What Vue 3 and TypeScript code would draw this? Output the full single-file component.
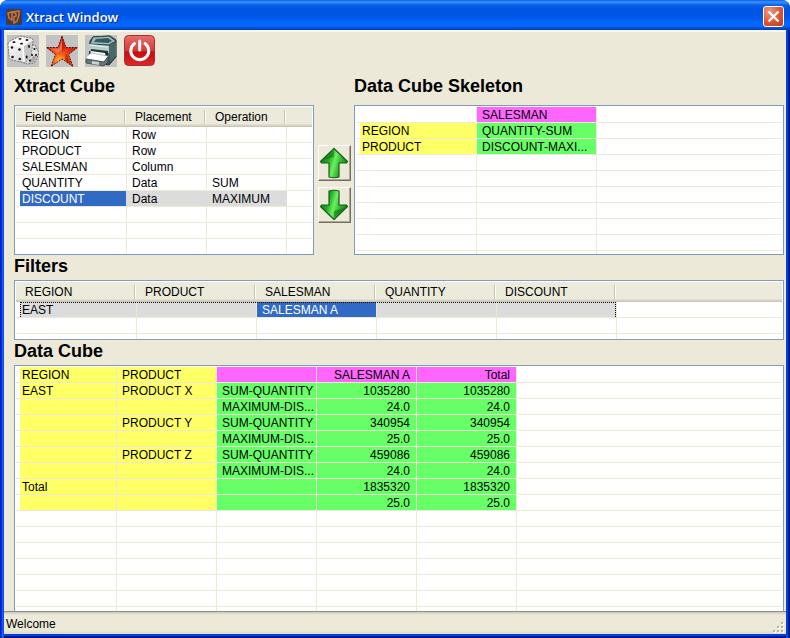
<script setup lang="ts">
import { ref } from 'vue'

interface Field {
  name: string
  placement: string
  operation: string
}

interface Cell {
  text: string
  tone: '' | 'yellow' | 'pink' | 'green'
  numeric?: boolean
}

const fields = ref<Field[]>([
  { name: 'REGION', placement: 'Row', operation: '' },
  { name: 'PRODUCT', placement: 'Row', operation: '' },
  { name: 'SALESMAN', placement: 'Column', operation: '' },
  { name: 'QUANTITY', placement: 'Data', operation: 'SUM' },
  { name: 'DISCOUNT', placement: 'Data', operation: 'MAXIMUM' },
])
const selected = ref(4)

function move(step: number) {
  const target = selected.value + step
  if (target < 0 || target >= fields.value.length) return
  const list = fields.value
  const moved = list[selected.value]
  list[selected.value] = list[target]
  list[target] = moved
  selected.value = target
}

const skeleton: Cell[][] = [
  [{ text: '', tone: '' }, { text: 'SALESMAN', tone: 'pink' }],
  [{ text: 'REGION', tone: 'yellow' }, { text: 'QUANTITY-SUM', tone: 'green' }],
  [{ text: 'PRODUCT', tone: 'yellow' }, { text: 'DISCOUNT-MAXI...', tone: 'green' }],
]

const filterNames = ['REGION', 'PRODUCT', 'SALESMAN', 'QUANTITY', 'DISCOUNT']
const filterValues = ['EAST', '', 'SALESMAN A', '', '']
const activeFilter = 2

const cubeRows: string[][] = [
  ['REGION', 'PRODUCT', '', 'SALESMAN A', 'Total'],
  ['EAST', 'PRODUCT X', 'SUM-QUANTITY', '1035280', '1035280'],
  ['', '', 'MAXIMUM-DIS...', '24.0', '24.0'],
  ['', 'PRODUCT Y', 'SUM-QUANTITY', '340954', '340954'],
  ['', '', 'MAXIMUM-DIS...', '25.0', '25.0'],
  ['', 'PRODUCT Z', 'SUM-QUANTITY', '459086', '459086'],
  ['', '', 'MAXIMUM-DIS...', '24.0', '24.0'],
  ['Total', '', '', '1835320', '1835320'],
  ['', '', '', '25.0', '25.0'],
]

const cube: Cell[][] = cubeRows.map((row, r) =>
  row.map((text, c) => ({
    text,
    tone: c < 2 ? 'yellow' : r === 0 ? 'pink' : 'green',
    numeric: c > 2,
  })),
)
</script>

<template>
  <div class="window">
    <header class="titlebar">
      <svg class="app-icon" viewBox="0 0 16 16" aria-hidden="true">
        <rect width="16" height="16" rx="1" fill="#4b3a3c" />
        <path d="M2 4 6 3v8l-3-2zM7 3l6-1v4l-2 6-3 2V8l2-1V5z" fill="none" stroke="#c8743c" stroke-width="1.5" />
      </svg>
      <span class="title">Xtract Window</span>
      <button class="close" type="button" aria-label="Close">
        <svg viewBox="0 0 19 19"><path d="m4.500 4.500 10 10m0-10-10 10" stroke="#fff" stroke-width="2.400" /></svg>
      </button>
    </header>

    <main class="body">
      <nav class="toolbar" aria-label="Tools">
        <button class="tool" type="button" aria-label="Roll">
          <svg viewBox="0 0 32 32">
            <defs>
              <linearGradient id="dieFront" x2="1" y2="1"><stop stop-color="#fff" /><stop offset="1" stop-color="#cfcfcf" /></linearGradient>
            </defs>
            <rect width="32" height="32" fill="#c3c3c3" />
            <path d="m22 9 6 1 3 6 1 3-5 9-7 1-6-3 3-12z" fill="#e4e4e4" stroke="#555" stroke-width=".8" stroke-dasharray="2 1" />
            <path d="m21 28 6-1 4-9-5 3z" fill="#aaa" />
            <path d="M1 9q0-2 2-3l10-5 10 2q3 0 3 3l-2 15-6 7-13-3q-3-1-3-4z" fill="url(#dieFront)" stroke="#555" stroke-width=".8" stroke-dasharray="2 1" />
            <path d="m17 11 8-5-1 15-6 6z" fill="#c5c5c5" />
            <path d="m2 8 11-6 12 3-8 6z" fill="#f8f8f8" />
            <path d="m2 9 14 2 1 16" fill="none" stroke="#fff" stroke-width="1.4" />
            <g fill="#161616">
              <ellipse cx="13" cy="3.8" rx="1.5" ry=".9" /><ellipse cx="7" cy="7.2" rx="1.5" ry=".9" />
              <ellipse cx="20" cy="5" rx="1.5" ry=".9" /><ellipse cx="14.5" cy="8.7" rx="1.5" ry=".9" />
              <circle cx="5" cy="12.5" r="1.3" /><circle cx="12.5" cy="14.5" r="1.3" />
              <circle cx="5.5" cy="22" r="1.3" /><circle cx="12.8" cy="24" r="1.3" />
              <ellipse cx="22" cy="11.5" rx="1" ry="1.4" /><ellipse cx="19.7" cy="22" rx="1" ry="1.4" />
              <circle cx="27.5" cy="14" r="1.1" /><circle cx="29" cy="20" r="1" /><circle cx="25" cy="20" r="1.1" /><circle cx="23" cy="25.5" r="1.1" />
            </g>
          </svg>
        </button>
        <button class="tool" type="button" aria-label="Favourite">
          <svg viewBox="0 0 32 32">
            <defs>
              <radialGradient id="starFill" cx=".42" cy=".8" r=".7"><stop stop-color="#ffc23a" /><stop offset=".3" stop-color="#f2601a" /><stop offset=".7" stop-color="#dc2a14" /><stop offset="1" stop-color="#c8200f" /></radialGradient>
            </defs>
            <rect width="32" height="32" fill="#c3c3c3" />
            <path d="m16 1 4 11.500h11.500l-9 7L27 31.500 16 24 5 31.500l4.500-12-9-7H12z" fill="url(#starFill)" stroke="#5c1208" stroke-width="1" stroke-dasharray="2 1" />
            <path d="m16 4-3 9.500H4l7 4.500 5-3z" fill="#ff8a70" opacity=".6" />
            <path d="m20 18 5 12-6-5z" fill="#9c0d08" opacity=".6" />
            <path d="m16 4 3 9-3 4z" fill="#b51408" opacity=".5" />
          </svg>
        </button>
        <button class="tool" type="button" aria-label="Print">
          <svg viewBox="0 0 32 32">
            <defs>
              <linearGradient id="printSide" x2="1" y2="1"><stop stop-color="#7f9c9c" /><stop offset="1" stop-color="#2c4244" /></linearGradient>
            </defs>
            <rect width="32" height="32" fill="#c3c3c3" />
            <path d="m5 6 3-4 17-1 6 4v17l-7 8-20-3z" fill="url(#printSide)" stroke="#253537" />
            <path d="m8 2 16-1 7 5-7 4-19-1z" fill="#9db8b8" stroke="#1f3032" stroke-width=".8" />
            <path d="m11 4 12-1 4 3-4 2-14-1z" fill="#36595b" />
            <path d="m4 9 20 2v7L4 16z" fill="#b7cdcd" />
            <path d="m5 10 18 2" stroke="#eef6f6" />
            <path d="m24 11 7-4v14l-6 6z" fill="#48686a" />
            <path d="m6 14 17 2v8L5 21z" fill="#223234" />
            <path d="m6 16 14 2 1 6-16-2z" fill="#f4f8fa" />
            <path d="m1 22 5-4 17 3-4 6-18-3z" fill="#fff" stroke="#8894a0" stroke-width=".6" />
            <path d="m1 24 18 3 4-5v5l-4 4-18-3z" fill="#66777a" stroke="#39494b" stroke-width=".8" />
            <path d="m7 26 7 1v3l-7-1z" fill="#c9d2d4" />
          </svg>
        </button>
        <button class="tool" type="button" aria-label="Power">
          <svg viewBox="0 0 32 32">
            <defs>
              <linearGradient id="powerFill" x2="0" y2="1"><stop stop-color="#e8706c" /><stop offset=".5" stop-color="#d43a38" /><stop offset=".55" stop-color="#c40d10" /><stop offset="1" stop-color="#da2929" /></linearGradient>
            </defs>
            <rect x=".5" y=".5" width="30" height="30" rx="4" fill="url(#powerFill)" stroke="#a83030" />
            <path d="M10.500 8.500a9 9 0 1 0 10.500 0" fill="none" stroke="#fff" stroke-width="3" stroke-linecap="round" />
            <path d="M15.700 6v9" stroke="#fff" stroke-width="3" stroke-linecap="round" />
          </svg>
        </button>
      </nav>

      <div class="top">
        <section class="fields">
          <h2 class="wide-gap">Xtract Cube</h2>
          <div class="pane short">
            <table aria-label="Xtract Cube">
              <colgroup><col class="w111" /><col class="w80" /><col class="w80" /><col /></colgroup>
              <thead>
                <tr><th>Field Name</th><th>Placement</th><th>Operation</th><th></th></tr>
              </thead>
              <tbody>
                <tr v-for="(f, i) in fields" :key="f.name" :class="{ picked: i === selected }" @click="selected = i">
                  <td><span :class="{ active: i === selected }">{{ f.name }}</span></td>
                  <td><span>{{ f.placement }}</span></td>
                  <td><span>{{ f.operation }}</span></td>
                  <td></td>
                </tr>
                <tr v-for="n in 3" :key="n"><td v-for="c in 4" :key="c"></td></tr>
              </tbody>
            </table>
          </div>
        </section>

        <div class="movers">
          <button type="button" aria-label="Move up" @click="move(-1)">
            <svg viewBox="0 0 30 32">
              <defs>
                <linearGradient id="arrow" x1="0" x2="1" y1=".3" y2=".6"><stop stop-color="#0f7a18" /><stop offset=".3" stop-color="#25a82a" /><stop offset=".52" stop-color="#6cf05e" /><stop offset=".75" stop-color="#28b02c" /><stop offset="1" stop-color="#0c8415" /></linearGradient>
              </defs>
              <path d="M15 1.500 28.500 14.500l-1 1.500H20v14q-5 1.500-10 0V16H2.500l-1-1.500z" fill="url(#arrow)" stroke="#1a5c1b" stroke-width="1.200" stroke-linejoin="round" />
              <path d="M15 3 5 13l10-3z" fill="#0a6610" opacity=".5" />
            </svg>
          </button>
          <button type="button" aria-label="Move down" @click="move(1)">
            <svg viewBox="0 0 30 32">
              <path d="M15 30.500 28.500 17.500l-1-1.500H20V2q-5-1.500-10 0v14H2.500l-1 1.500z" fill="url(#arrow)" stroke="#1a5c1b" stroke-width="1.200" stroke-linejoin="round" />
              <path d="m15 29 10-10-10 3z" fill="#0a6610" opacity=".5" />
            </svg>
          </button>
        </div>

        <section class="skeleton">
          <h2 class="wide-gap">Data Cube Skeleton</h2>
          <div class="pane short">
            <table aria-label="Data Cube Skeleton">
              <colgroup><col class="w121" /><col class="w120" /><col /></colgroup>
              <tbody>
                <tr v-for="(row, r) in skeleton" :key="r">
                  <td v-for="(cell, c) in row" :key="c"><span :class="cell.tone">{{ cell.text }}</span></td>
                  <td></td>
                </tr>
                <tr v-for="n in 7" :key="n"><td v-for="c in 3" :key="c"></td></tr>
              </tbody>
            </table>
          </div>
        </section>
      </div>

      <section class="filters">
        <h2>Filters</h2>
        <div class="pane thin">
          <table aria-label="Filters">
            <colgroup><col class="w121" /><col v-for="n in 4" :key="n" class="w120" /><col /></colgroup>
            <thead>
              <tr><th v-for="name in filterNames" :key="name">{{ name }}</th><th></th></tr>
            </thead>
            <tbody>
              <tr class="focused">
                <td v-for="(value, i) in filterValues" :key="i"><span :class="{ active: i === activeFilter }">{{ value }}</span></td>
                <td></td>
              </tr>
              <tr v-for="n in 2" :key="n"><td v-for="c in 6" :key="c"></td></tr>
            </tbody>
          </table>
        </div>
      </section>

      <section class="cube">
        <h2>Data Cube</h2>
        <div class="pane fill">
          <table aria-label="Data Cube">
            <colgroup><col class="w101" /><col v-for="n in 4" :key="n" class="w100" /><col /></colgroup>
            <tbody>
              <tr v-for="(row, r) in cube" :key="r">
                <td v-for="(cell, c) in row" :key="c"><span :class="[cell.tone, { numeric: cell.numeric }]">{{ cell.text }}</span></td>
                <td></td>
              </tr>
              <tr v-for="n in 40" :key="n"><td v-for="c in 6" :key="c"></td></tr>
            </tbody>
          </table>
        </div>
      </section>
    </main>

    <footer class="status">
      <span>Welcome</span>
      <svg class="grip" viewBox="0 0 12 12" aria-hidden="true">
        <path d="M9 1h2v2H9zM5 5h2v2H5zM9 5h2v2H9zM1 9h2v2H1zM5 9h2v2H5zM9 9h2v2H9z" fill="#fff" />
        <path d="M8 0h2v2H8zM4 4h2v2H4zM8 4h2v2H8zM0 8h2v2H0zM4 8h2v2H4zM8 8h2v2H8z" fill="#b8b4a2" />
      </svg>
    </footer>
  </div>
</template>

<style>
body {
  margin: 0;
  background: #fff;
}
</style>

<style scoped>
* {
  box-sizing: border-box;
}
.window {
  display: flex;
  flex-direction: column;
  height: 100vh;
  padding: 0 4px 4px;
  overflow: hidden;
  border-radius: 8px 8px 0 0;
  background:
    linear-gradient(to right, #0019cf 0 1px, #0a35dc 1px 2px, #1160ec 2px 3px, #0855dd 3px 4px, transparent 4px) left / 4px 100% no-repeat,
    linear-gradient(to left, #00138c 0 1px, #001ea0 1px 2px, #0441d8 2px 4px, transparent 4px) right / 4px 100% no-repeat,
    linear-gradient(to top, #00138c 0 1px, #001ea0 1px 2px, #0441d8 2px 4px) bottom / 100% 4px no-repeat,
    #0855dd;
  font-family: "Liberation Sans", Arial, sans-serif;
  font-size: 12px;
  color: #000;
}
button {
  padding: 0;
  border: 0;
  background: none;
}
svg {
  display: block;
}
.titlebar {
  display: flex;
  align-items: center;
  gap: 4px;
  flex: none;
  height: 30px;
  margin: 0 -4px;
  padding: 3px 6px 0;
  background: linear-gradient(#0a5ce0 0, #3a93ff 2px, #0a62e8 5px, #0054e3 9px, #0055e5 16px, #0264fb 22px, #0468ff 26px, #0050d8 28px, #003dbd 30px);
}
.app-icon {
  width: 16px;
  height: 16px;
}
.title {
  flex: 1;
  color: #fff;
  font: 600 13px "Open Sans", "Trebuchet MS", sans-serif;
  text-shadow: 1px 1px #0a2c8c;
}
.close {
  width: 21px;
  height: 21px;
  border: 1px solid #fff;
  border-radius: 3px;
  background: radial-gradient(circle at 30% 25%, #eb9a80, #dd5433 55%, #c03912);
}
.body {
  display: flex;
  flex-direction: column;
  flex: 1;
  min-height: 0;
  border-top: 2px solid #f8f7f1;
  background: #ece9d8;
}
.toolbar {
  display: flex;
  gap: 7px;
  padding: 3px;
}
.tool,
.tool svg {
  width: 32px;
  height: 32px;
}
.top {
  display: flex;
  padding: 5px 2px 0 10px;
}
.fields {
  flex: 0 0 300px;
}
.movers {
  display: flex;
  flex-direction: column;
  flex: 0 0 40px;
  align-items: center;
  gap: 6px;
  padding-top: 70px;
}
.movers button {
  display: flex;
  align-items: center;
  justify-content: center;
  width: 33px;
  height: 36px;
  border: 1px solid;
  border-color: #fff #716f64 #716f64 #fff;
  box-shadow: inset -1px -1px #aca899;
}
.movers svg {
  width: 30px;
  height: 32px;
}
.skeleton {
  flex: 1;
  min-width: 0;
}
.filters,
.cube {
  padding: 0 2px 0 10px;
}
.cube {
  display: flex;
  flex-direction: column;
  flex: 1;
  min-height: 0;
}
h2 {
  margin: 0;
  padding-bottom: 3px;
  font-size: 18px;
  line-height: 22px;
}
.wide-gap {
  padding-bottom: 8px;
}
.pane {
  padding: 1px;
  overflow: hidden;
  border: 1px solid #7f9db9;
  background: #fff;
}
.short {
  height: 150px;
}
.thin {
  height: 60px;
}
.fill {
  flex: 1;
  min-height: 0;
  border-bottom: 0;
}
table {
  width: 100%;
  table-layout: fixed;
  border-spacing: 0;
}
.w80 { width: 80px; }
.w100 { width: 100px; }
.w101 { width: 101px; }
.w111 { width: 111px; }
.w120 { width: 120px; }
.w121 { width: 121px; }
th {
  height: 20px;
  padding: 0 0 0 8px;
  background:
    linear-gradient(to right, #c5c2b2 0 1px, #fff 1px 2px) calc(100% - 1px) 3px / 2px 14px no-repeat,
    linear-gradient(#ebeadb 0 17px, #e2decd 17px 18px, #d6d2c2 18px 19px, #cbc7b8 19px 20px);
  font-weight: 400;
  line-height: 18px;
  text-align: left;
}
th:first-child {
  padding-left: 9px;
}
th:last-child {
  background: linear-gradient(#ebeadb 0 17px, #e2decd 17px 18px, #d6d2c2 18px 19px, #cbc7b8 19px 20px);
}
td {
  height: 16px;
  padding: 0;
  border-right: 1px solid #ece9d8;
  border-bottom: 1px solid #ece9d8;
}
td:first-child {
  padding-left: 4px;
}
td:last-child {
  border-right: 0;
}
td span {
  display: block;
  height: 15px;
  padding-left: 5px;
  overflow: hidden;
  line-height: 17px;
  text-overflow: ellipsis;
  white-space: nowrap;
}
td:first-child span {
  padding-left: 2px;
}
td .numeric {
  padding-right: 6px;
  text-align: right;
}
.yellow { background: #ffff66; }
.pink { background: #ff66ff; }
.green { background: #66ff66; }
.picked span,
.focused span {
  background: #dcdcdc;
}
.picked td:not(:last-child) {
  border-right-color: #dcdcdc;
}
.picked span.active,
.focused span.active {
  background: #316ac5;
  color: #fff;
}
.focused span {
  border-top: 1px dotted #000;
  line-height: 14px;
}
.focused td:first-child span {
  padding-left: 1px;
  border-left: 1px dotted #000;
}
.focused td:nth-last-child(2) span {
  border-right: 1px dotted #000;
}
.status {
  display: flex;
  align-items: center;
  justify-content: space-between;
  flex: none;
  height: 23px;
  padding: 2px 1px 0 2px;
  border-top: 1px solid #8e8b7c;
  background: linear-gradient(#cbc8b8 0, #ece9d8 3px, #ece9d8 18px, #dedac8 100%);
}
.grip {
  align-self: flex-end;
  width: 12px;
  height: 12px;
}
</style>
